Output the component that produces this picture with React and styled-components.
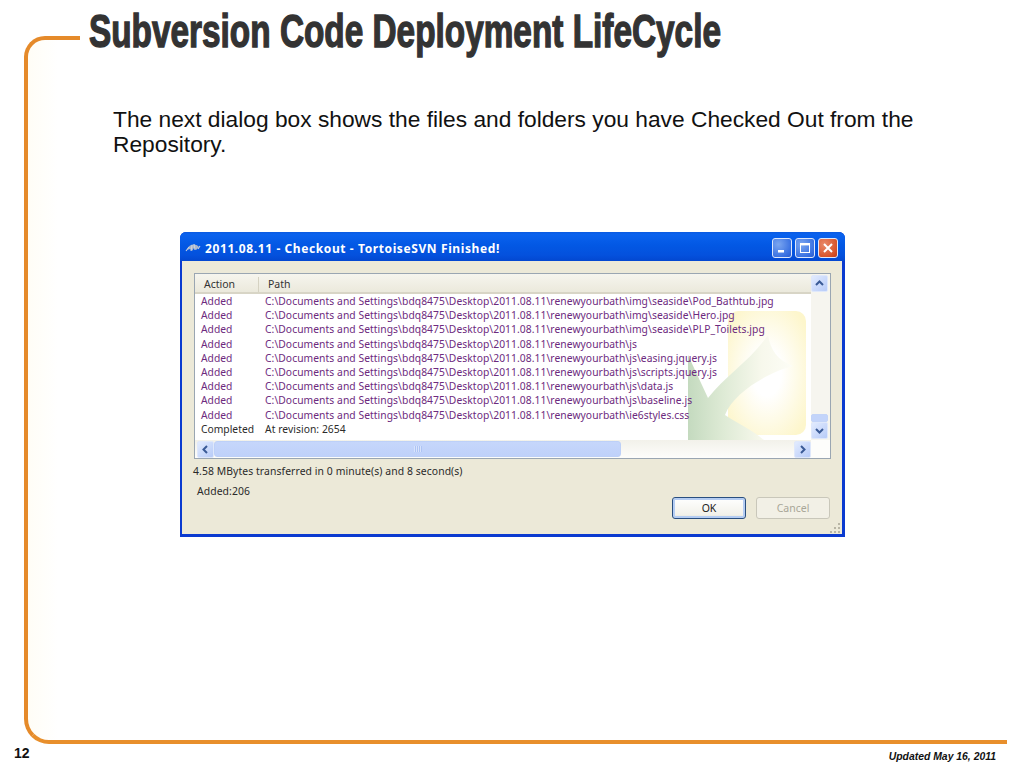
import React from "react";
import styled, { createGlobalStyle } from "styled-components";

const GlobalStyle = createGlobalStyle`
  html, body {
    margin: 0;
    padding: 0;
    background: #fff;
  }
  #root {
    width: 1024px;
    height: 768px;
    overflow: hidden;
  }
`;

const Slide = styled.div`
  width: 1024px;
  height: 768px;
  display: flex;
  flex-direction: column;
  padding-top: 36px;
  box-sizing: border-box;
  background: #fff;
`;

const Frame = styled.main`
  width: 983px;
  height: 708px;
  margin-left: 24px;
  box-sizing: border-box;
  border-left: 4px solid #e58a2a;
  border-top: 4px solid #e58a2a;
  border-bottom: 4px solid #e88f2c;
  border-radius: 21px 0 0 25px;
  background: linear-gradient(90deg, #fffdf6 0, #fff 30px);
  display: flex;
  flex-direction: column;
`;

const TitleBar = styled.div`
  margin: -40px 0 0 52px;
  height: 63px;
  background: #fff;
  padding-left: 9px;
`;

const Title = styled.h1`
  margin: 0;
  font-family: "Liberation Sans", Arial, sans-serif;
  font-size: 46px;
  line-height: 63px;
  font-weight: 700;
  color: #333;
  white-space: nowrap;
  -webkit-text-stroke: 1.4px #333;
  transform: scaleX(0.725);
  transform-origin: left center;
`;

const Lead = styled.p`
  margin: 44px 0 0 85px;
  width: 830px;
  font-family: "Liberation Sans", Arial, sans-serif;
  font-size: 22.75px;
  line-height: 25px;
  color: #111;
`;

const Dialog = styled.section`
  margin: 75px 0 0 152px;
  width: 665px;
  height: 305px;
  box-sizing: border-box;
  display: flex;
  flex-direction: column;
  background: #0831d9;
  border-radius: 6px 6px 0 0;
  border: 1px solid #0a3ad0;
  border-width: 0 3px 3px 2px;
  font-family: "Noto Sans", "Open Sans", sans-serif;
`;

const Caption = styled.header`
  height: 29px;
  flex: none;
  box-sizing: border-box;
  margin: 0 -3px 0 -2px;
  padding: 3px 7px 0 5px;
  display: flex;
  align-items: center;
  gap: 4px;
  border-radius: 6px 6px 0 0;
  background: linear-gradient(180deg, #0a5ae0 0, #0a62ee 8%, #0358e4 45%, #0451dd 80%, #0347d0 100%);
`;

const CaptionText = styled.span`
  flex: 1;
  color: #fff;
  font-weight: 700;
  font-size: 12px;
  letter-spacing: 0.6px;
  white-space: nowrap;
`;

const CaptionButton = styled.span`
  width: 20px;
  height: 20px;
  box-sizing: border-box;
  margin-left: -1px;
  border: 1px solid #dfe8fb;
  border-radius: 3px;
  display: grid;
  place-items: center;
  background: ${(p) =>
    p.$close
      ? "radial-gradient(circle at 30% 30%, #e98a6a, #d8542a 70%, #c23a18)"
      : "radial-gradient(circle at 30% 30%, #7ba6f0, #3b72e2 70%, #2a5cd0)"};
`;

const Client = styled.div`
  flex: 1;
  position: relative;
  background: #ece9d8;
  padding: 12px 11px 0 12px;
  display: flex;
  flex-direction: column;
`;

const ListBox = styled.div`
  width: 637px;
  height: 186px;
  flex: none;
  box-sizing: border-box;
  border: 1px solid #9aa6b2;
  background: #fff;
  display: grid;
  grid-template-columns: 1fr 19px;
  grid-template-rows: 20px 1fr 18px;
`;

const HeaderRow = styled.div`
  grid-column: 1 / 2;
  display: flex;
  align-items: center;
  padding-top: 2px;
  background: linear-gradient(180deg, #f6f5ee, #ebe9dc);
  border-bottom: 2px solid #d8d5c6;
  box-sizing: border-box;
  font-size: 10.5px;
  color: #333;
`;

const HeaderCell = styled.span`
  width: ${(p) => p.$width}px;
  box-sizing: border-box;
  padding-left: ${(p) => p.$pad}px;
  border-right: ${(p) => (p.$divider ? "1px solid #d5d2c2" : "none")};
  line-height: 15px;
`;

const Rows = styled.div`
  grid-column: 1 / 2;
  position: relative;
  overflow: hidden;
`;

const Watermark = styled.svg`
  position: absolute;
  left: 493px;
  top: 17px;
`;

const Row = styled.div`
  position: relative;
  height: 14.2px;
  display: flex;
  align-items: center;
  font-size: 10.3px;
  line-height: 14px;
  white-space: nowrap;
  color: ${(p) => (p.$done ? "#2b2b2b" : "#6d2a7e")};
`;

const ActionCell = styled.span`
  width: 70px;
  flex: none;
  padding-left: 6px;
  box-sizing: border-box;
`;

const PathCell = styled.span`
  letter-spacing: 0.06px;
`;

const VScroll = styled.div`
  grid-column: 2;
  grid-row: 1 / 3;
  background: #f6f5ef;
  display: flex;
  flex-direction: column;
  padding: 1px 1px 1px 0;
  box-sizing: border-box;
`;

const ScrollButton = styled.span`
  width: 17px;
  height: 17px;
  flex: none;
  box-sizing: border-box;
  border: 1px solid #dfe8fb;
  border-radius: 2px;
  background: linear-gradient(135deg, #e2ebfe, #b7cbf8);
  display: grid;
  place-items: center;
`;

const VThumb = styled.span`
  width: 17px;
  height: 8px;
  flex: none;
  margin-top: auto;
  box-sizing: border-box;
  border: 1px solid #c3d4f8;
  border-radius: 2px;
  background: #c3d4fa;
`;

const HScroll = styled.div`
  grid-column: 1 / 2;
  display: flex;
  align-items: center;
  background: linear-gradient(180deg, #f2f1ea, #fdfdfb);
  padding: 0 0 0 2px;
`;

const HThumb = styled.span`
  width: 407px;
  height: 16px;
  flex: none;
  box-sizing: border-box;
  border: 1px solid #bdd0f8;
  border-radius: 3px;
  background: linear-gradient(180deg, #c6d6fb, #bfd1fa);
  display: grid;
  place-items: center;
`;

const ThumbGrip = styled.span`
  width: 8px;
  height: 6px;
  background: repeating-linear-gradient(90deg, #d8e3fc 0 1px, #aec4f4 1px 2px);
`;

const Spacer = styled.span`
  flex: 1;
`;

const Corner = styled.div`
  grid-column: 2;
  background: #fdfdfb;
`;

const Stat = styled.div`
  font-size: 10.4px;
  line-height: 14px;
  color: #2a2a2a;
  letter-spacing: 0.08px;
  margin: ${(p) => p.$margin};
`;

const Buttons = styled.div`
  position: absolute;
  right: 12px;
  bottom: 15px;
  display: flex;
  gap: 10px;
`;

const PushButton = styled.span`
  width: 74px;
  height: 22px;
  box-sizing: border-box;
  display: grid;
  place-items: center;
  font-size: 10.5px;
  border-radius: 3px;
  border: 1px solid ${(p) => (p.$disabled ? "#c9c7ba" : "#2a4f80")};
  color: ${(p) => (p.$disabled ? "#a8a698" : "#222")};
  background: ${(p) => (p.$disabled ? "#f2f0e6" : "linear-gradient(180deg, #fff, #f2f1ea 85%, #dcd8cc)")};
  box-shadow: ${(p) => (p.$disabled ? "none" : "inset 0 0 0 2px #b5cdf3")};
`;

const Grip = styled.svg`
  position: absolute;
  right: 1px;
  bottom: 1px;
`;

const Footer = styled.footer`
  display: flex;
  justify-content: space-between;
  align-items: flex-start;
  padding: 1px 28px 0 14px;
  font-family: "Liberation Sans", Arial, sans-serif;
  color: #111;
`;

const PageNumber = styled.span`
  font-size: 14px;
  font-weight: 700;
  line-height: 16px;
`;

const Updated = styled.span`
  font-size: 10.4px;
  font-weight: 700;
  font-style: italic;
  line-height: 12px;
  margin-top: 6px;
`;

const Chevron = ({ dir }) => {
  const points = {
    up: "1,6 4.5,2.5 8,6",
    down: "1,3 4.5,6.5 8,3",
    left: "6,1 2.5,4.5 6,8",
    right: "3,1 6.5,4.5 3,8",
  }[dir];
  return (
    <svg width="9" height="9" viewBox="0 0 9 9">
      <polyline points={points} fill="none" stroke="#3a5a96" strokeWidth="2" />
    </svg>
  );
};

const base = "C:\\Documents and Settings\\bdq8475\\Desktop\\2011.08.11\\renewyourbath\\";
const files = [
  "img\\seaside\\Pod_Bathtub.jpg",
  "img\\seaside\\Hero.jpg",
  "img\\seaside\\PLP_Toilets.jpg",
  "js",
  "js\\easing.jquery.js",
  "js\\scripts.jquery.js",
  "js\\data.js",
  "js\\baseline.js",
  "ie6styles.css",
];

export default function App() {
  return (
    <Slide>
      <GlobalStyle />
      <Frame>
        <TitleBar>
          <Title>Subversion Code Deployment LifeCycle</Title>
        </TitleBar>
        <Lead>
          The next dialog box shows the files and folders you have Checked Out from the Repository.
        </Lead>
        <Dialog>
          <Caption>
            <svg width="16" height="14" viewBox="0 0 16 14">
              <path d="M2 9 C4 3 10 2 14 6 L11 9 L9 7 L7 10 L5 8 Z" fill="#aab6cc" />
              <path d="M1 10 4 6M6 10l1-6M10 9 9 3M13 8l2-3" stroke="#c8d0de" strokeWidth="1.1" fill="none" />
            </svg>
            <CaptionText>2011.08.11 - Checkout - TortoiseSVN Finished!</CaptionText>
            <CaptionButton>
              <svg width="12" height="12" viewBox="0 0 12 12">
                <rect x="2" y="8" width="6" height="2.5" fill="#fff" />
              </svg>
            </CaptionButton>
            <CaptionButton>
              <svg width="12" height="12" viewBox="0 0 12 12">
                <rect x="1.5" y="1.5" width="9" height="9" fill="none" stroke="#fff" strokeWidth="1" />
                <rect x="1.5" y="1" width="9" height="2.4" fill="#fff" />
              </svg>
            </CaptionButton>
            <CaptionButton $close>
              <svg width="12" height="12" viewBox="0 0 12 12">
                <path d="M2 2l8 8M10 2l-8 8" stroke="#fff" strokeWidth="2" />
              </svg>
            </CaptionButton>
          </Caption>
          <Client>
            <ListBox>
              <HeaderRow>
                <HeaderCell $width={64} $pad={9} $divider>Action</HeaderCell>
                <HeaderCell $width={100} $pad={9}>Path</HeaderCell>
              </HeaderRow>
              <VScroll>
                <ScrollButton><Chevron dir="up" /></ScrollButton>
                <VThumb />
                <ScrollButton><Chevron dir="down" /></ScrollButton>
              </VScroll>
              <Rows>
                <Watermark width="125" height="130" viewBox="0 0 125 130">
                  <defs>
                    <radialGradient id="wmYellow" cx="50%" cy="50%" r="62%">
                      <stop offset="0.3" stopColor="#ffffff" />
                      <stop offset="1" stopColor="#fdf6cc" />
                    </radialGradient>
                    <linearGradient id="wmGreen" x1="0" x2="1" y1="0" y2="0">
                      <stop offset="0" stopColor="#c4dabf" />
                      <stop offset="0.35" stopColor="#dfeBd6" />
                      <stop offset="0.7" stopColor="#f7f8ec" />
                      <stop offset="1" stopColor="#fdfdf6" />
                    </linearGradient>
                  </defs>
                  <rect x="40" y="0" width="78" height="124" rx="10" fill="url(#wmYellow)" />
                  <path
                    d="M0 44 L20 87 C36 66 62 50 80 24 C82 38 90 50 105 55 C84 60 46 80 37 104 C48 112 64 118 77 130 L0 130 Z"
                    fill="url(#wmGreen)"
                  />
                </Watermark>
                {files.map((file) => (
                  <Row key={file}>
                    <ActionCell>Added</ActionCell>
                    <PathCell>{base + file}</PathCell>
                  </Row>
                ))}
                <Row $done>
                  <ActionCell>Completed</ActionCell>
                  <PathCell>At revision: 2654</PathCell>
                </Row>
              </Rows>
              <HScroll>
                <ScrollButton><Chevron dir="left" /></ScrollButton>
                <HThumb><ThumbGrip /></HThumb>
                <Spacer />
                <ScrollButton><Chevron dir="right" /></ScrollButton>
              </HScroll>
              <Corner />
            </ListBox>
            <Stat $margin="5px 0 0 -1px">4.58 MBytes transferred in 0 minute(s) and 8 second(s)</Stat>
            <Stat $margin="6px 0 0 3px">Added:206</Stat>
            <Buttons>
              <PushButton>OK</PushButton>
              <PushButton $disabled>Cancel</PushButton>
            </Buttons>
            <Grip width="12" height="12" viewBox="0 0 12 12">
              <path d="M9 2h2v2H9zM5 6h2v2H5zM9 6h2v2H9zM1 10h2v2H1zM5 10h2v2H5zM9 10h2v2H9z" fill="#b8b5a5" />
            </Grip>
          </Client>
        </Dialog>
      </Frame>
      <Footer>
        <PageNumber>12</PageNumber>
        <Updated>Updated May 16, 2011</Updated>
      </Footer>
    </Slide>
  );
}
